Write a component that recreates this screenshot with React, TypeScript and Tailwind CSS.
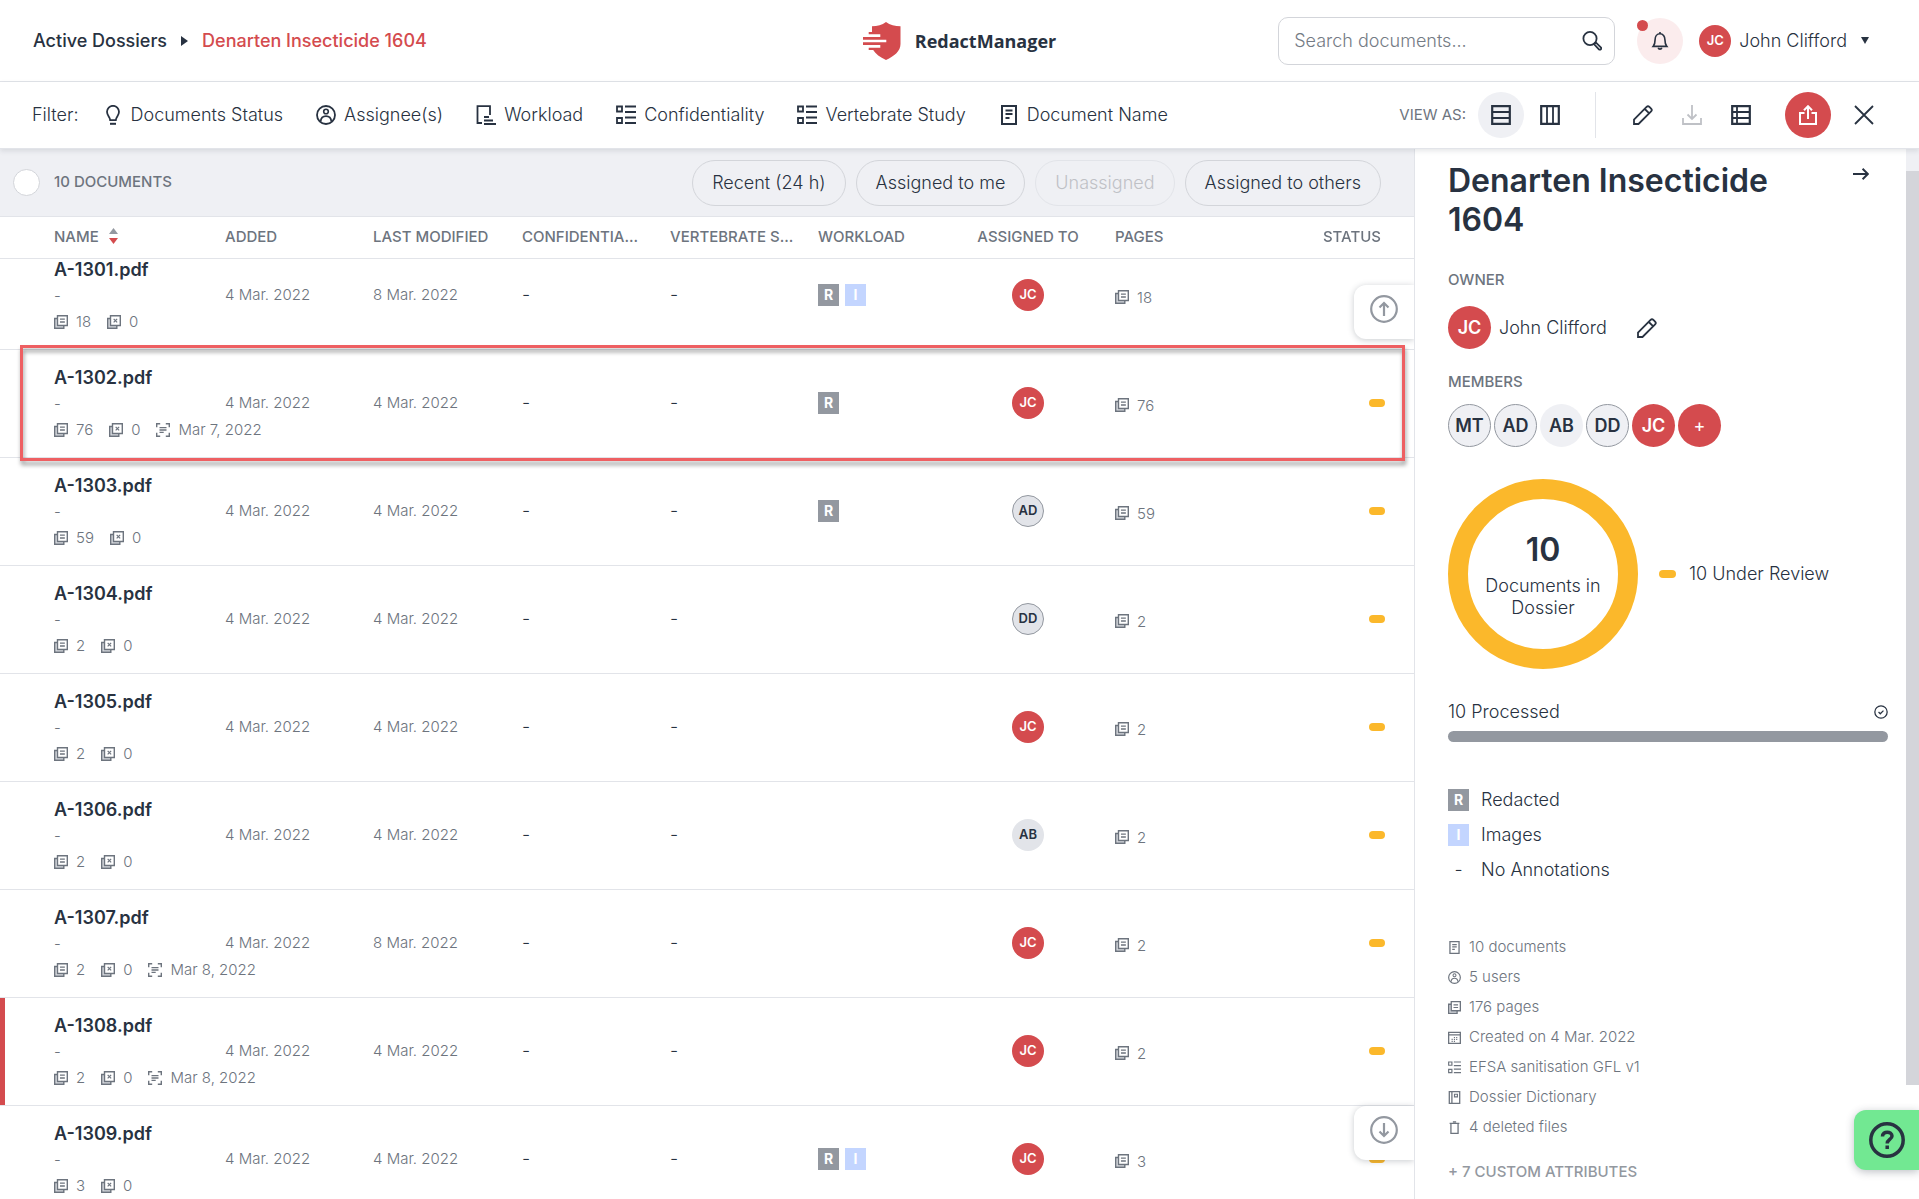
import { useLayoutEffect, useRef, type ReactNode } from "react";

interface IconProps {
  className?: string;
}

interface Doc {
  name: string;
  modified: string;
  pages: number;
  ocr?: string;
  workload: ("R" | "I")[];
  assignee: "JC" | "AD" | "DD" | "AB";
  marked?: boolean;
}

const DOCS: Doc[] = [
  { name: "A-1301.pdf", modified: "8 Mar. 2022", pages: 18, workload: ["R", "I"], assignee: "JC" },
  { name: "A-1302.pdf", modified: "4 Mar. 2022", pages: 76, ocr: "Mar 7, 2022", workload: ["R"], assignee: "JC" },
  { name: "A-1303.pdf", modified: "4 Mar. 2022", pages: 59, workload: ["R"], assignee: "AD" },
  { name: "A-1304.pdf", modified: "4 Mar. 2022", pages: 2, workload: [], assignee: "DD" },
  { name: "A-1305.pdf", modified: "4 Mar. 2022", pages: 2, workload: [], assignee: "JC" },
  { name: "A-1306.pdf", modified: "4 Mar. 2022", pages: 2, workload: [], assignee: "AB" },
  { name: "A-1307.pdf", modified: "8 Mar. 2022", pages: 2, ocr: "Mar 8, 2022", workload: [], assignee: "JC" },
  { name: "A-1308.pdf", modified: "4 Mar. 2022", pages: 2, ocr: "Mar 8, 2022", workload: [], assignee: "JC", marked: true },
  { name: "A-1309.pdf", modified: "4 Mar. 2022", pages: 3, workload: ["R", "I"], assignee: "JC" },
];

function Svg({ className = "size-5", children }: IconProps & { children: ReactNode }) {
  return (
    <svg viewBox="0 0 20 20" fill="none" stroke="currentColor" strokeWidth="1.8" className={`shrink-0 ${className}`} aria-hidden="true">
      {children}
    </svg>
  );
}

const BulbIcon = (p: IconProps) => (
  <Svg {...p}>
    <path d="M7.2 15.2c0-3.2-3.2-4.6-3.2-8.4a6 6 0 0 1 12 0c0 3.800-3.200 5.200-3.200 8.400z" />
    <path d="M7 18.800h6" strokeWidth="2" />
  </Svg>
);

const UserIcon = (p: IconProps) => (
  <Svg {...p}>
    <circle cx="10" cy="10" r="9" />
    <circle cx="10" cy="6.500" r="2.300" strokeWidth="1.600" />
    <path d="M4.600 16.500c.4-3.800 2.600-5.300 5.400-5.300s5 1.500 5.400 5.300" />
  </Svg>
);

const WorkloadIcon = (p: IconProps) => (
  <Svg {...p}>
    <path d="M6 18H1.500V1.200H14V10" />
    <path d="M8 12h5M8 15.500h9M8 19h12" />
  </Svg>
);

const ListIcon = (p: IconProps) => (
  <Svg {...p}>
    <path d="M1 1.500h5v5H1zM1 13h5v5H1zM9 1.500h11M9 7h11M9 12.500h11M9 18h11" />
  </Svg>
);

const DocIcon = (p: IconProps) => (
  <Svg {...p}>
    <path d="M3 1h14v18H3z" strokeWidth="2" />
    <path d="M6.500 5.500h7M6.500 9h7M6.500 13h4" />
  </Svg>
);

const SearchIcon = (p: IconProps) => (
  <Svg {...p}>
    <circle cx="8" cy="7.500" r="6.600" />
    <path d="m12 13 1.800-1.600 5 5a1.300 1.300 0 0 1-1.900 1.900z" />
  </Svg>
);

const BellIcon = (p: IconProps) => (
  <Svg {...p}>
    <path d="M2.500 16h15c-1.300-1.500-2-2.800-2-7 0-4-2.200-7-5.500-7S4.500 5 4.500 9c0 4.200-.7 5.500-2 7z" />
    <path d="M10 0v2M8 17.500c.5 2 3.500 2 4 0" />
  </Svg>
);

const RowsIcon = (p: IconProps) => (
  <Svg {...p}>
    <path d="M1.200 1.200h17.600v17.600H1.200z" strokeWidth="2.200" />
    <path d="M1 7h18M1 13h18" />
  </Svg>
);

const ColumnsIcon = (p: IconProps) => (
  <Svg {...p}>
    <path d="M1.200 1.200h17.600v17.600H1.200z" strokeWidth="2.200" />
    <path d="M7 1v18M13 1v18" />
  </Svg>
);

const ReportIcon = (p: IconProps) => (
  <Svg {...p}>
    <path d="M1.200 1.200h17.600v17.600H1.200z" strokeWidth="2.200" />
    <path d="M6 1v18M1 7h18M1 13h18" />
  </Svg>
);

const PencilIcon = (p: IconProps) => (
  <Svg {...p}>
    <path d="M1 19v-4.500L13.600 1.900a2 2 0 0 1 2.800 0l1.700 1.700a2 2 0 0 1 0 2.800L5.500 19zM11.800 4l4.200 4.200" />
  </Svg>
);

const DownloadIcon = (p: IconProps) => (
  <Svg {...p}>
    <path d="M1 13v6h18v-6M10 0v14M5.500 9.500 10 14l4.500-4.500" />
  </Svg>
);

const ShareIcon = (p: IconProps) => (
  <Svg {...p}>
    <path d="M6.500 8H2v11h16V8h-4.500M10 14V2M6 5.200l4-4 4 4" strokeWidth="2" />
  </Svg>
);

const CloseIcon = (p: IconProps) => (
  <Svg {...p}>
    <path d="m1 1 18 18M19 1 1 19" />
  </Svg>
);

const PagesIcon = (p: IconProps) => (
  <Svg {...p}>
    <path d="M5 5H1v14h13v-4" fill="#d9dbe0" strokeWidth="2" />
    <path d="M5 1h14v14H5z" fill="#fff" strokeWidth="2" />
    <path d="M8.500 6h7M8.500 10h7" />
  </Svg>
);

const ExcludedIcon = (p: IconProps) => (
  <Svg {...p}>
    <path d="M5 5H1v14h13v-4" fill="#d9dbe0" strokeWidth="2" />
    <path d="M5 1h14v14H5z" fill="#fff" strokeWidth="2" />
    <path d="m9.500 5.500 5 5M14.500 5.500l-5 5" strokeWidth="1.700" />
  </Svg>
);

const OcrIcon = (p: IconProps) => (
  <Svg {...p}>
    <path d="M1 6V1h5M14 1h5v5M19 14v5h-5M6 19H1v-5" strokeWidth="2" />
    <path d="M5 6.500h10M5 10h10M5 13.500h6" />
  </Svg>
);

const CalendarIcon = (p: IconProps) => (
  <Svg {...p}>
    <path d="M1 2h18v17H1zM1 6h18" strokeWidth="2" />
    <path d="M9 10h1.800M12.500 10h1.800M9 13h1.800M12.500 13h1.800M5.500 13h1.800M5.500 16h1.800M9 16h1.800" />
  </Svg>
);

const BookIcon = (p: IconProps) => (
  <Svg {...p}>
    <path d="M2 1h16v18H2zM6 1v18" strokeWidth="2" />
    <path d="M10 5h4.500v4H10z" />
  </Svg>
);

const TrashIcon = (p: IconProps) => (
  <Svg {...p}>
    <path d="M4.500 3.500h11V19h-11zM2.500 3.500h15M7.500 1.200h5" strokeWidth="2" />
  </Svg>
);

const CheckCircleIcon = (p: IconProps) => (
  <Svg {...p}>
    <circle cx="10" cy="10" r="8.800" />
    <path d="m6.500 10 2.500 2.500L13.500 8" />
  </Svg>
);

const ArrowRightIcon = (p: IconProps) => (
  <Svg {...p}>
    <path d="M0 10h18M12 3.500l6.500 6.500-6.500 6.500" strokeWidth="2.400" />
  </Svg>
);

const CircleArrow = ({ down }: { down?: boolean }) => (
  <svg viewBox="0 0 28 28" fill="none" stroke="currentColor" strokeWidth="2.200" className="size-7" aria-hidden="true">
    <circle cx="14" cy="14" r="12.800" />
    {down ? <path d="M14 7v13M9.500 15.500 14 20l4.500-4.500" /> : <path d="M14 21V8M9.500 12.500 14 8l4.500 4.500" />}
  </svg>
);

const Logo = () => (
  <svg viewBox="0 0 38 38" className="size-[38px]" fill="#d44b4e" aria-hidden="true">
    <path d="M23 0c4 3 9 4.300 14.500 4.300V22c0 7-6 12-14.500 16-6-3-10.500-6-12.800-10H5.700v-2.300h11.600V23H0v-2.700h23.300v-2.600H0V15h17.300v-2.700H5.700V10H9V4.300C14.500 4.300 19 3 23 0z" />
  </svg>
);

const AVATAR_STYLES: Record<string, string> = {
  JC: "bg-[#d44b4e] text-white",
  AD: "bg-[#e2e4e9] border border-[#9398a0]",
  DD: "bg-[#e2e4e9] border border-[#9398a0]",
  AB: "bg-[#e2e4e9]",
};

function Avatar({ initials }: { initials: string }) {
  return (
    <span className={`inline-flex size-8 items-center justify-center rounded-full text-[13px] font-semibold ${AVATAR_STYLES[initials]}`}>
      {initials}
    </span>
  );
}

function Badge({ type }: { type: "R" | "I" }) {
  return (
    <span className={`inline-flex h-[22px] w-[21px] items-center justify-center text-sm font-bold text-white ${type === "R" ? "bg-[#9398a0]" : "bg-[#c3d5ff]"}`}>
      {type}
    </span>
  );
}

const StatusPill = () => <span className="inline-block h-2 w-4 rounded-full bg-[#fbb82b]" />;

const FILTERS = [
  { label: "Documents Status", Icon: BulbIcon },
  { label: "Assignee(s)", Icon: UserIcon },
  { label: "Workload", Icon: WorkloadIcon },
  { label: "Confidentiality", Icon: ListIcon },
  { label: "Vertebrate Study", Icon: ListIcon },
  { label: "Document Name", Icon: DocIcon },
];

const QUICK_FILTERS = ["Recent (24 h)", "Assigned to me", "Unassigned", "Assigned to others"];

const DETAILS = [
  { label: "10 documents", Icon: DocIcon },
  { label: "5 users", Icon: UserIcon },
  { label: "176 pages", Icon: PagesIcon },
  { label: "Created on 4 Mar. 2022", Icon: CalendarIcon },
  { label: "EFSA sanitisation GFL v1", Icon: ListIcon },
  { label: "Dossier Dictionary", Icon: BookIcon },
  { label: "4 deleted files", Icon: TrashIcon },
];

function TopBar() {
  return (
    <header className="grid h-[82px] shrink-0 grid-cols-[1fr_auto_1fr] items-center border-b border-[#e2e4e9]">
      <nav className="flex items-center gap-3.5 pl-[33px] font-medium">
        <a href="#dossiers">Active Dossiers</a>
        <svg viewBox="0 0 7 10" className="h-2.5 w-[7px]" fill="currentColor" aria-hidden="true">
          <path d="M0 0v10l7-5z" />
        </svg>
        <a href="#dossier" className="text-[#d44b4e]">Denarten Insecticide 1604</a>
      </nav>

      <div className="flex items-center gap-3.5">
        <Logo />
        <span className="font-['Open_Sans',sans-serif] text-lg font-bold">RedactManager</span>
      </div>

      <div className="flex items-center justify-end pr-[50px]">
        <div className="flex h-12 w-[337px] items-center rounded-[10px] border border-[#d3d5da] pr-3 pl-[15px]">
          <input
            type="search"
            aria-label="Search documents"
            placeholder="Search documents..."
            className="min-w-0 flex-1 bg-transparent font-light outline-none placeholder:text-[#747b85]"
          />
          <button aria-label="Search">
            <SearchIcon />
          </button>
        </div>
        <button aria-label="Notifications" className="relative ml-[22px] flex size-[46px] items-center justify-center rounded-full bg-[#fbeced]">
          <BellIcon className="size-[18px]" />
          <span className="absolute top-0.5 left-0 size-[11px] rounded-full bg-[#d44b4e]" />
        </button>
        <button className="ml-4 flex items-center gap-2 font-light">
          <Avatar initials="JC" />
          John Clifford
          <svg viewBox="0 0 8 7" className="ml-1.5 h-[7px] w-2" fill="currentColor" aria-hidden="true">
            <path d="M0 0h8L4 7z" />
          </svg>
        </button>
      </div>
    </header>
  );
}

function FilterBar() {
  return (
    <div className="relative z-20 flex h-[67px] shrink-0 items-center border-b border-[#e2e4e9] bg-white pr-8 pl-8 font-light shadow-[0_2px_5px_rgba(40,50,65,0.12)]">
      <span className="mr-6">Filter:</span>
      <div className="flex gap-[33px]">
        {FILTERS.map(({ label, Icon }) => (
          <button key={label} className="flex items-center gap-2 whitespace-nowrap">
            <Icon />
            {label}
          </button>
        ))}
      </div>
      <div className="ml-auto flex items-center">
        <span className="mr-3 text-[15px] font-normal text-[#6d747e]">VIEW AS:</span>
        <button aria-label="Table view" className="flex size-[46px] items-center justify-center rounded-full bg-[#eff0f4]">
          <RowsIcon />
        </button>
        <button aria-label="Workflow view" className="ml-[3px] flex size-[46px] items-center justify-center">
          <ColumnsIcon />
        </button>
        <div className="mr-6 ml-[22px] h-[46px] w-px bg-[#e2e4e9]" />
        <div className="flex gap-[3px]">
          <button aria-label="Edit dossier" className="flex size-[46px] items-center justify-center">
            <PencilIcon />
          </button>
          <button aria-label="Download" disabled className="flex size-[46px] items-center justify-center text-[#bfc1c6]">
            <DownloadIcon />
          </button>
          <button aria-label="Reports" className="flex size-[46px] items-center justify-center">
            <ReportIcon />
          </button>
        </div>
        <button aria-label="Upload" className="mr-2.5 ml-[21px] flex size-[46px] items-center justify-center rounded-full bg-[#d44b4e] text-white">
          <ShareIcon />
        </button>
        <button aria-label="Close" className="flex size-[46px] items-center justify-center">
          <CloseIcon />
        </button>
      </div>
    </div>
  );
}

function DocumentRow({ doc }: { doc: Doc }) {
  return (
    <tr className="[&>td]:h-[108px] [&>td]:border-b [&>td]:border-[#e2e4e9] [&>td]:p-0 [&>td+td]:pb-0.5">
      <td className="relative">
        {doc.marked && <span className="absolute inset-y-0 left-0 w-[5px] bg-[#d44b4e]" />}
        <div className="pl-[54px] leading-[26px] whitespace-nowrap">
          <div className="text-lg leading-[26px] font-semibold text-[#283241]">{doc.name}</div>
          <div>-</div>
          <div className="flex items-center gap-2">
            <PagesIcon className="size-3.5" />
            <span className="mr-2">{doc.pages}</span>
            <ExcludedIcon className="size-3.5" />
            <span className="mr-2">0</span>
            {doc.ocr && (
              <>
                <OcrIcon className="size-3.5" />
                <span>{doc.ocr}</span>
              </>
            )}
          </div>
        </div>
      </td>
      <td>4 Mar. 2022</td>
      <td>{doc.modified}</td>
      <td className="text-lg text-[#283241]">-</td>
      <td className="text-lg text-[#283241]">-</td>
      <td>
        <div className="flex gap-1.5">
          {doc.workload.map((type) => (
            <Badge key={type} type={type} />
          ))}
        </div>
      </td>
      <td className="text-[#283241]">
        <div className="flex justify-center">
          <Avatar initials={doc.assignee} />
        </div>
      </td>
      <td>
        <div className="flex items-center gap-2 pt-1.5">
          <PagesIcon className="size-3.5" />
          {doc.pages}
        </div>
      </td>
      <td>
        <div className="flex justify-end pr-[29px]">
          <StatusPill />
        </div>
      </td>
    </tr>
  );
}

function DocumentTable() {
  const scroller = useRef<HTMLDivElement>(null);

  useLayoutEffect(() => {
    if (scroller.current) scroller.current.scrollTop = 17;
  }, []);

  return (
    <div className="relative min-h-0 flex-1">
      <div ref={scroller} className="h-full overflow-y-auto [scrollbar-width:none]">
        <table className="w-full table-fixed border-separate border-spacing-0 text-[15px] font-light text-[#6d747e]">
          <colgroup>
            <col className="w-[225px]" />
            <col className="w-[148px]" />
            <col className="w-[149px]" />
            <col className="w-[148px]" />
            <col className="w-[148px]" />
            <col className="w-[123px]" />
            <col className="w-[174px]" />
            <col className="w-[149px]" />
            <col />
          </colgroup>
          <thead className="sticky top-0 z-10 bg-white [&_th]:h-[42px] [&_th]:truncate [&_th]:border-b [&_th]:border-[#e2e4e9] [&_th]:p-0 [&_th]:pb-0.5 [&_th]:text-left [&_th]:font-medium">
            <tr>
              <th>
                <button className="flex items-center gap-2.5 pl-[54px]">
                  NAME
                  <svg viewBox="0 0 9 16" className="h-4 w-[9px]" aria-hidden="true">
                    <path d="M0 6 4.500 0 9 6z" fill="#9398a0" />
                    <path d="m0 10 4.500 6L9 10z" fill="#d44b4e" />
                  </svg>
                </button>
              </th>
              <th>ADDED</th>
              <th>LAST MODIFIED</th>
              <th>CONFIDENTIA...</th>
              <th>VERTEBRATE S...</th>
              <th>WORKLOAD</th>
              <th>
                <div className="text-center">ASSIGNED TO</div>
              </th>
              <th>PAGES</th>
              <th>
                <div className="pr-[33px] text-right">STATUS</div>
              </th>
            </tr>
          </thead>
          <tbody>
            {DOCS.map((doc) => (
              <DocumentRow key={doc.name} doc={doc} />
            ))}
          </tbody>
        </table>
      </div>

      <button
        aria-label="Scroll up"
        className="absolute top-[68px] right-0 flex h-[54px] w-[60px] items-start rounded-l-xl bg-white pt-2.5 pl-4 text-[#9398a0] shadow-[0_1px_6px_rgba(40,50,65,0.25)] [clip-path:inset(-8px_0_-8px_-8px)]"
      >
        <CircleArrow />
      </button>
      <button
        aria-label="Scroll down"
        className="absolute right-0 bottom-[39px] flex h-[54px] w-[60px] items-start rounded-l-xl bg-white pt-2.5 pl-4 text-[#9398a0] shadow-[0_1px_6px_rgba(40,50,65,0.25)] [clip-path:inset(-8px_0_-8px_-8px)]"
      >
        <CircleArrow down />
      </button>
      <div className="pointer-events-none absolute top-32 right-[9px] left-5 h-[116px] border-[3px] border-[#ee5f62] drop-shadow-[1px_4px_2px_rgba(0,0,0,0.4)]" />
    </div>
  );
}

function Members() {
  return (
    <div className="mt-3 flex gap-[3px] text-lg font-semibold">
      {["MT", "AD", "AB", "DD"].map((m) => (
        <span
          key={m}
          className={`flex size-[43px] items-center justify-center rounded-full bg-[#eff0f4] ${m === "AB" ? "" : "border border-[#9398a0]"}`}
        >
          {m}
        </span>
      ))}
      <span className="flex size-[43px] items-center justify-center rounded-full bg-[#d44b4e] text-white">JC</span>
      <button aria-label="Add member" className="flex size-[43px] items-center justify-center rounded-full bg-[#d44b4e] font-normal text-white">
        +
      </button>
    </div>
  );
}

function DossierPanel() {
  return (
    <aside className="flex w-[505px] shrink-0 border-l border-[#e2e4e9]">
      <div className="min-w-0 flex-1 overflow-hidden pt-3 pr-[18px] pl-[33px] font-light">
        <div className="flex items-start justify-between pr-[19px]">
          <h1 className="w-[360px] text-[32px] leading-[39px] font-semibold">Denarten Insecticide 1604</h1>
          <button aria-label="Collapse details" className="mt-[5px]">
            <ArrowRightIcon className="size-4" />
          </button>
        </div>

        <h2 className="mt-[31px] text-[15px] leading-5 font-medium text-[#6d747e]">OWNER</h2>
        <div className="mt-4 flex items-center gap-2">
          <span className="flex size-[43px] items-center justify-center rounded-full bg-[#d44b4e] text-lg font-semibold text-white">JC</span>
          John Clifford
          <button aria-label="Edit owner" className="ml-[22px]">
            <PencilIcon />
          </button>
        </div>

        <h2 className="mt-[23px] text-[15px] leading-5 font-medium text-[#6d747e]">MEMBERS</h2>
        <Members />

        <div className="mt-8 flex items-center">
          <div className="flex size-[190px] flex-col items-center rounded-full border-20 border-[#fbb82b] pt-[30px] text-center leading-[22px]">
            <div className="mb-1 text-[32px] leading-[42px] font-semibold">10</div>
            Documents in
            <br />
            Dossier
          </div>
          <span className="ml-[21px] h-2 w-[17px] rounded-full bg-[#fbb82b]" />
          <span className="ml-[13px]">10 Under Review</span>
        </div>

        <div className="mt-[31px] flex items-center justify-between leading-6">
          10 Processed
          <CheckCircleIcon className="size-3.5" />
        </div>
        <div className="mt-[7px] h-[11px] rounded-full bg-[#9398a0]" />

        <ul className="mt-[47px] flex flex-col gap-[13px] leading-[22px]">
          <li className="flex items-center gap-3">
            <Badge type="R" />
            Redacted
          </li>
          <li className="flex items-center gap-3">
            <Badge type="I" />
            Images
          </li>
          <li className="flex items-center gap-3">
            <span className="w-[21px] text-center">-</span>
            No Annotations
          </li>
        </ul>

        <ul className="mt-[51px] text-[15px] leading-[30px] text-[#6d747e]">
          {DETAILS.map(({ label, Icon }) => (
            <li key={label} className="flex items-center gap-2">
              <Icon className="size-[13px]" />
              {label}
            </li>
          ))}
        </ul>
        <button className="mt-[18px] text-[15px] font-medium text-[#9398a0]">+ 7 CUSTOM ATTRIBUTES</button>
      </div>
      <div className="w-[13px] shrink-0">
        <div className="h-[22px] bg-[#eff0f4]" />
        <div className="h-[87%] bg-[#d4d5da]" />
      </div>
    </aside>
  );
}

export default function App() {
  return (
    <div className="relative flex h-screen flex-col overflow-hidden bg-white font-[Inter,sans-serif] text-lg text-[#283241]">
      <TopBar />
      <FilterBar />
      <main className="flex min-h-0 flex-1">
        <section className="flex min-w-0 flex-1 flex-col">
          <div className="flex h-[68px] shrink-0 items-center border-b border-[#e2e4e9] bg-[#eff0f4] pr-[33px] pl-[13px]">
            <input
              type="checkbox"
              aria-label="Select all documents"
              className="size-[27px] appearance-none rounded-full border border-[#d3d5da] bg-white"
            />
            <span className="ml-3.5 pb-0.5 text-[15px] font-medium text-[#6d747e]">10 DOCUMENTS</span>
            <div className="ml-auto flex gap-2.5 font-light">
              {QUICK_FILTERS.map((label) => (
                <button
                  key={label}
                  disabled={label === "Unassigned"}
                  className="h-[46px] rounded-full border border-[#d3d5da] px-[19px] disabled:border-[#e2e4e9] disabled:text-[#bfc1c6]"
                >
                  {label}
                </button>
              ))}
            </div>
          </div>
          <DocumentTable />
        </section>
        <DossierPanel />
      </main>

      <button
        aria-label="Help"
        className="absolute right-0 bottom-[29px] z-30 flex h-[60px] w-[65px] items-center rounded-l-xl bg-[#72e892] pl-[15px] shadow-[0_2px_8px_rgba(40,50,65,0.3)]"
      >
        <svg viewBox="0 0 36 36" className="size-9" fill="none" stroke="currentColor" strokeWidth="3.500" aria-hidden="true">
          <circle cx="18" cy="18" r="16.200" />
          <path d="M13.500 14.500c0-6 9.500-5.500 9.500-.5 0 3.500-4.800 3.500-4.800 7.500M18.200 23.500v3.500" />
        </svg>
      </button>
    </div>
  );
}
